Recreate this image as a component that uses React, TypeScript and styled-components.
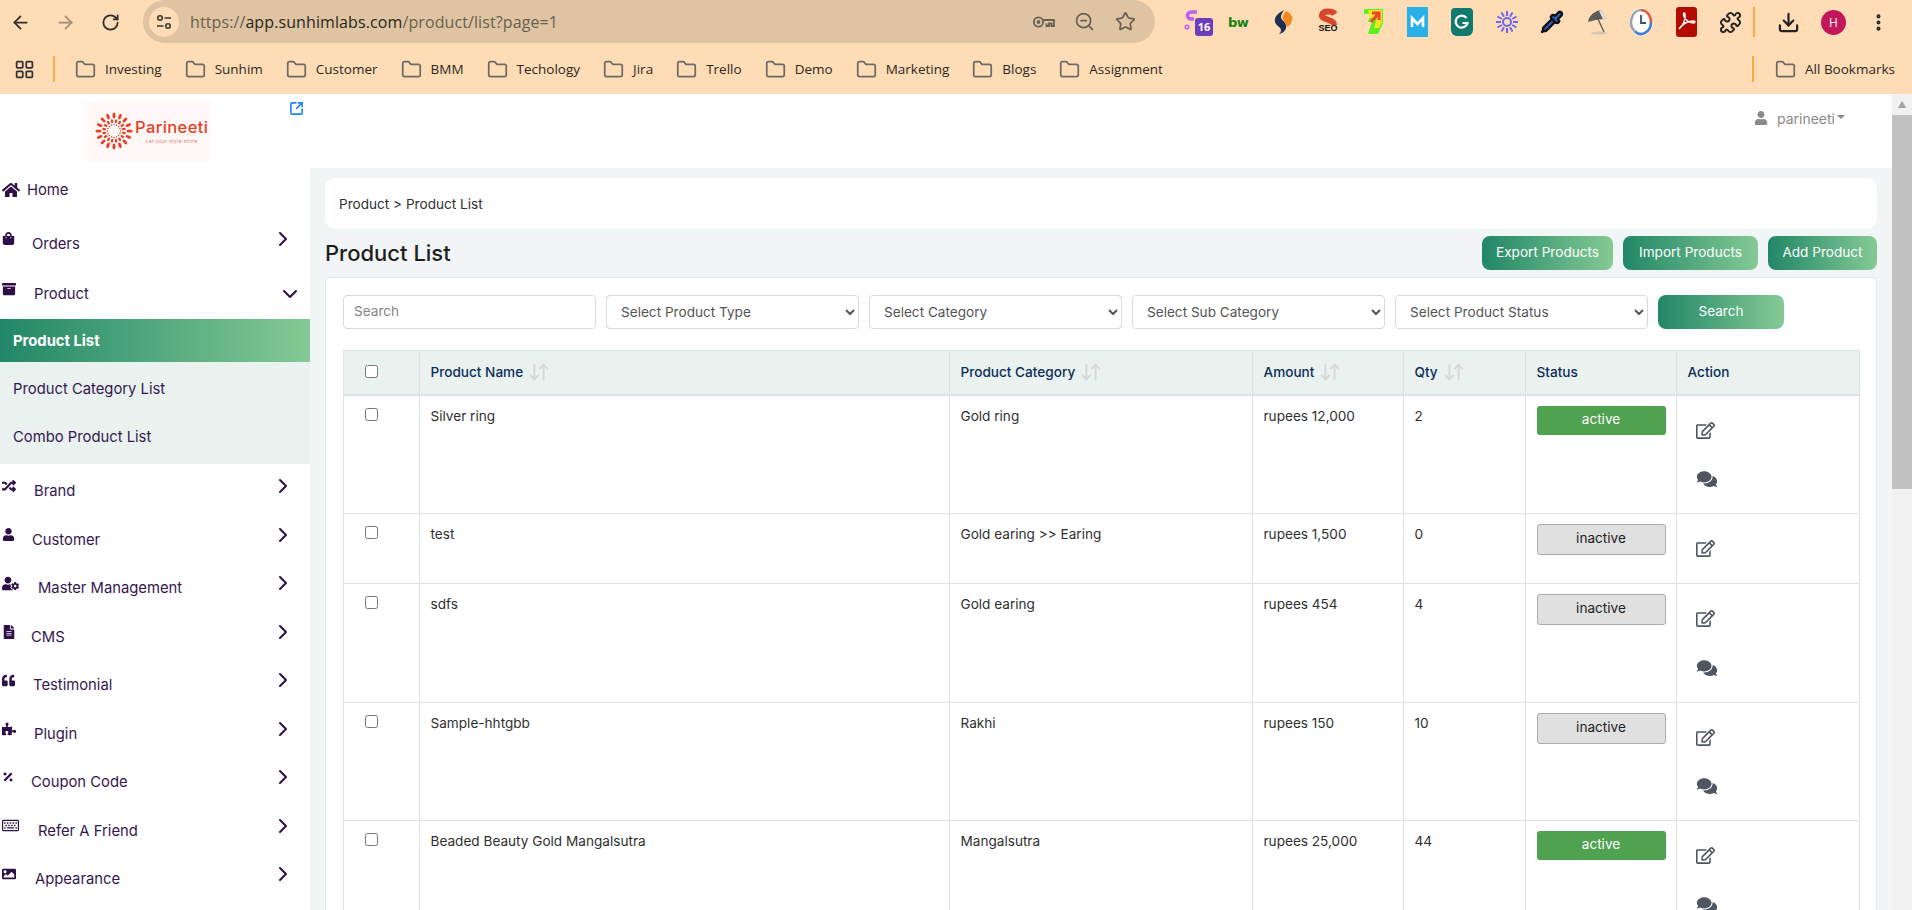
import React from 'react';
import styled, { createGlobalStyle } from 'styled-components';
import {
  ArrowDownUp,
  ArrowLeft,
  ArrowRight,
  ChevronDown,
  ChevronRight,
  Download,
  EllipsisVertical,
  LayoutGrid,
  Pipette,
  Puzzle,
  RotateCw,
  SquareArrowOutUpRight,
  Star,
  ZoomOut,
  Folder,
} from 'lucide-react';
import {
  FaArchive,
  FaComments,
  FaFileAlt,
  FaHome,
  FaImage,
  FaPercentage,
  FaPuzzlePiece,
  FaQuoteLeft,
  FaRandom,
  FaRegEdit,
  FaRegKeyboard,
  FaShoppingBag,
  FaUser,
  FaUserCog,
} from 'react-icons/fa';

const GlobalStyle = createGlobalStyle`
  html, body {
    margin: 0;
    height: 100%;
    overflow: hidden;
    background: #fff;
  }
  * { box-sizing: border-box; }
`;

const FONT = `Inter, "Open Sans", sans-serif`;
const GRADIENT = 'linear-gradient(90deg, #218767 0%, #84ca94 100%)';

// --- Browser chrome ---

const Browser = styled.div`
  display: flex;
  flex-direction: column;
  height: 910px;
  width: 1912px;
  overflow: hidden;
  font-family: ${FONT};
`;

const Chrome = styled.header`
  height: 94px;
  flex: none;
  background: #fedcb6;
  font-family: "Open Sans", sans-serif;
`;

const Toolbar = styled.div`
  display: flex;
  align-items: flex-start;
  height: 47px;
`;

const NavButton = styled.span<{ $dim?: boolean }>`
  width: 40px;
  height: 44px;
  margin-right: 5px;
  display: flex;
  align-items: center;
  justify-content: center;
  color: ${p => (p.$dim ? '#a08c74' : '#2b2b2b')};
`;

const Omnibox = styled.div`
  width: 1012px;
  height: 43px;
  margin-left: 8px;
  border-radius: 22px;
  background: #dec4a2;
  display: flex;
  align-items: center;
  padding-left: 6px;
`;

const SiteIcon = styled.span`
  width: 30px;
  height: 30px;
  border-radius: 50%;
  background: #fedcb6;
  display: flex;
  align-items: center;
  justify-content: center;
  flex: none;
`;

const Url = styled.div`
  margin-left: 11px;
  font-size: 16px;
  color: #6a5f50;
  flex: 1;
  white-space: nowrap;
  letter-spacing: 0.1px;
  b {
    font-weight: 400;
    color: #2b2620;
  }
`;

const OmniIcon = styled.span`
  width: 41px;
  height: 30px;
  display: flex;
  align-items: center;
  justify-content: center;
  color: #6b6256;
`;

const Extensions = styled.div`
  display: flex;
  margin-left: 16px;
  height: 44px;
  align-items: center;
`;

const Ext = styled.span`
  position: relative;
  width: 44.8px;
  height: 30px;
  display: flex;
  align-items: center;
  justify-content: center;
  flex: none;
`;

const ExtBadge = styled.span`
  position: absolute;
  left: 24px;
  top: 11px;
  width: 18px;
  height: 18px;
  border-radius: 3px;
  background: #6c3dbd;
  color: #fff;
  font-size: 11px;
  font-weight: 700;
  text-align: center;
  line-height: 18px;
`;

const BwMark = styled.span`
  font-family: "DejaVu Sans", sans-serif;
  font-weight: 700;
  font-size: 13px;
  color: #14820f;
  letter-spacing: -0.5px;
`;

const Divider = styled.span<{ $h: number }>`
  width: 2px;
  height: ${p => p.$h}px;
  background: #f9ab45;
  flex: none;
`;

const Avatar = styled.span`
  width: 25px;
  height: 25px;
  border-radius: 50%;
  background: #c2185b;
  color: #fff;
  font-size: 12px;
  text-align: center;
  line-height: 25px;
`;

const BookmarkBar = styled.div`
  display: flex;
  align-items: center;
  height: 44px;
  padding-left: 14px;
`;

const Bookmark = styled.span`
  display: flex;
  align-items: center;
  gap: 9px;
  margin-right: 23px;
  font-size: 13.5px;
  color: #2c2720;
  white-space: nowrap;
`;

const BookmarkSpacer = styled.span`
  flex: 1;
`;

// --- Page ---

const Viewport = styled.div`
  flex: 1;
  display: flex;
  min-height: 0;
`;

const Page = styled.div`
  flex: 1;
  min-width: 0;
  display: grid;
  grid-template-columns: 310px 1fr;
  grid-template-rows: 74px 1fr;
`;

const Scrollbar = styled.div`
  width: 20px;
  flex: none;
  background: #f1f1f1;
  display: flex;
  flex-direction: column;
  align-items: center;
`;

const ScrollArrow = styled.span`
  height: 21px;
  display: flex;
  align-items: center;
  color: #a3a3a3;
  font-size: 9px;
`;

const ScrollThumb = styled.div`
  width: 100%;
  height: 374px;
  background: #c1c1c1;
`;

const Sidebar = styled.aside`
  grid-row: 1 / 3;
  overflow: hidden;
  background: #fff;
`;

const LogoRow = styled.div`
  height: 74px;
  display: flex;
  align-items: flex-start;
  padding: 7px 6px 0 85px;
  justify-content: space-between;
  color: #1a82ff;
`;

const LogoBox = styled.div`
  width: 126px;
  height: 60px;
  background: #fff8f6;
  display: flex;
  align-items: center;
  padding-left: 10px;
  gap: 2px;
`;

const LogoWords = styled.div`
  display: flex;
  flex-direction: column;
  align-items: center;
`;

const LogoName = styled.span`
  font-size: 16.5px;
  line-height: 19px;
  color: #e63f26;
  font-weight: 500;
  letter-spacing: 0.4px;
`;

const LogoTag = styled.span`
  font-size: 5px;
  line-height: 8px;
  color: #e57f72;
  letter-spacing: 0.3px;
`;

const NavRow = styled.div<{ $h?: number; $after?: number; $indent: number }>`
  height: ${p => p.$h ?? 48.5}px;
  margin-bottom: ${p => p.$after ?? 0}px;
  display: flex;
  align-items: center;
  padding-left: 2px;
  color: #33174f;
  font-size: 14.8px;
  svg { flex: none; }
`;

const NavIcon = styled.span<{ $w: number }>`
  width: ${p => p.$w}px;
  flex: none;
  display: flex;
  margin-bottom: 10px;
  color: #2c0f47;
`;

const NavLabel = styled.span`
  flex: 1;
  white-space: nowrap;
`;

const NavChevron = styled.span<{ $down?: boolean }>`
  width: 24px;
  margin-right: ${p => (p.$down ? 8 : 15)}px;
  margin-bottom: ${p => (p.$down ? 0 : 10)}px;
  display: flex;
  color: #2c0f47;
`;

const SubList = styled.div`
  background: #e9f2ef;
  height: 145px;
`;

const SubItem = styled.div<{ $active?: boolean }>`
  height: ${p => (p.$active ? 43 : 48)}px;
  margin-bottom: ${p => (p.$active ? 3 : 0)}px;
  padding-left: 13px;
  display: flex;
  align-items: center;
  font-size: 14.8px;
  color: ${p => (p.$active ? '#fff' : '#33174f')};
  font-weight: ${p => (p.$active ? 700 : 400)};
  background: ${p => (p.$active ? GRADIENT : 'transparent')};
`;

const TopBar = styled.div`
  background: #fff;
  display: flex;
  justify-content: flex-end;
  align-items: flex-start;
  padding: 14px 47px 0 0;
  color: #8a8a8a;
  font-size: 14px;
`;

const UserMenu = styled.div`
  display: flex;
  align-items: center;
  height: 20px;
  gap: 9px;
`;

const Caret = styled.span`
  width: 0;
  height: 0;
  margin: 0 0 2px -7px;
  border-left: 4px solid transparent;
  border-right: 4px solid transparent;
  border-top: 4px solid #8a8a8a;
`;

const Main = styled.main`
  background: #f1f5f5;
  padding: 10px 15px 0;
  overflow: hidden;
  min-height: 0;
`;

const Breadcrumb = styled.div`
  height: 51px;
  background: #fff;
  border-radius: 10px;
  padding-left: 14px;
  display: flex;
  align-items: center;
  font-size: 13.6px;
  color: #2f2f2f;
`;

const TitleRow = styled.div`
  height: 48px;
  display: flex;
  align-items: flex-start;
  justify-content: space-between;
  padding-top: 7px;
`;

const Title = styled.h1`
  margin: 0;
  font-size: 22px;
  line-height: 34px;
  font-weight: 500;
  color: #1e1e1e;
`;

const ActionGroup = styled.div`
  display: flex;
  gap: 10px;
`;

const GradientButton = styled.button<{ $w: number }>`
  width: ${p => p.$w}px;
  height: 34px;
  border: none;
  border-radius: 8px;
  background: ${GRADIENT};
  color: #fff;
  font-family: ${FONT};
  font-size: 13.6px;
  padding: 0 0 2px;
  flex: none;
`;

const Card = styled.section`
  background: #fff;
  border: 1px solid #e2e6e6;
  border-radius: 4px;
  padding: 17px 17px 0;
`;

const Filters = styled.div`
  display: flex;
  gap: 10px;
  margin-bottom: 21px;
`;

const SearchInput = styled.input`
  width: 253px;
  height: 34px;
  border: 1px solid #d6dade;
  border-radius: 4px;
  padding: 0 10px 3px;
  font-family: ${FONT};
  font-size: 13.6px;
  color: #555;
  &::placeholder { color: #868686; }
`;

const Select = styled.select`
  width: 253px;
  height: 34px;
  border: 1px solid #d6dade;
  border-radius: 4px;
  background: #fff;
  padding: 0 6px 0 10px;
  font-family: ${FONT};
  font-size: 13.6px;
  color: #555;
`;

const Table = styled.table`
  width: 1516px;
  table-layout: fixed;
  border-collapse: collapse;
  font-size: 13.6px;
  color: #2f2f2f;
`;

const HeadCell = styled.th`
  height: 44px;
  background: #e9f2ef;
  border: 1px solid #dde2e6;
  border-bottom-width: 2px;
  padding: 0 10.5px;
  text-align: left;
  font-weight: 500;
  color: #0c2c5a;
  white-space: nowrap;
`;

const HeadInner = styled.span`
  display: flex;
  align-items: center;
  gap: 5px;
  color: #0c2c5a;
  svg { color: #d6d8d8; flex: none; }
`;

const Cell = styled.td`
  border: 1px solid #dde2e6;
  padding: 10px 10.5px 0;
  vertical-align: top;
  line-height: 21px;
`;

const Check = styled.input.attrs({ type: 'checkbox' })<{ $top: number }>`
  display: block;
  width: 13px;
  height: 13px;
  margin: ${p => p.$top}px 0 0 21px;
`;

const StatusBadge = styled.div<{ $active: boolean }>`
  height: ${p => (p.$active ? 29 : 31)}px;
  border-radius: 3px;
  display: flex;
  align-items: center;
  justify-content: center;
  background: ${p => (p.$active ? '#4fa250' : '#e0e0e0')};
  border: ${p => (p.$active ? 'none' : '1px solid #ababab')};
  color: ${p => (p.$active ? '#fff' : '#222')};
  font-size: 13.6px;
  padding-bottom: 2px;
`;

const Actions = styled.div`
  display: flex;
  flex-direction: column;
  gap: 30.6px;
  padding: 15px 0 25px 8px;
  color: #4f5660;
  svg { display: block; }
`;

// --- Data ---

const bookmarks = ['Investing', 'Sunhim', 'Customer', 'BMM', 'Techology', 'Jira', 'Trello', 'Demo', 'Marketing', 'Blogs', 'Assignment'];

const lowerNav = [
  { label: 'Brand', icon: <FaRandom size={14} />, w: 32 },
  { label: 'Customer', icon: <FaUser size={13} />, w: 30 },
  { label: 'Master Management', icon: <FaUserCog size={17} />, w: 36 },
  { label: 'CMS', icon: <FaFileAlt size={14} />, w: 29 },
  { label: 'Testimonial', icon: <FaQuoteLeft size={13} />, w: 31 },
  { label: 'Plugin', icon: <FaPuzzlePiece size={14} />, w: 32 },
  { label: 'Coupon Code', icon: <FaPercentage size={12} />, w: 29 },
  { label: 'Refer A Friend', icon: <FaRegKeyboard size={17} />, w: 36 },
  { label: 'Appearance', icon: <FaImage size={14} />, w: 33 },
  { label: 'Settings', icon: <FaFileAlt size={14} />, w: 33 },
];

const products = [
  { name: 'Silver ring', category: 'Gold ring', amount: 'rupees 12,000', qty: 2, active: true, chat: true },
  { name: 'test', category: 'Gold earing >> Earing', amount: 'rupees 1,500', qty: 0, active: false, chat: false },
  { name: 'sdfs', category: 'Gold earing', amount: 'rupees 454', qty: 4, active: false, chat: true },
  { name: 'Sample-hhtgbb', category: 'Rakhi', amount: 'rupees 150', qty: 10, active: false, chat: true },
  { name: 'Beaded Beauty Gold Mangalsutra', category: 'Mangalsutra', amount: 'rupees 25,000', qty: 44, active: true, chat: true },
];

const columns = [76, 530, 303, 151, 122, 151, 183];

// --- Small drawings ---

const SliderIcon = () => (
  <svg width="18" height="18" viewBox="0 0 18 18" fill="none" stroke="#3a332a" strokeWidth="1.6">
    <circle cx="5" cy="5" r="2.2" />
    <path d="M9.5 5H16M2 13h6.5" />
    <circle cx="13" cy="13" r="2.2" />
  </svg>
);

const KeyIcon = () => (
  <svg width="24" height="16" viewBox="0 0 24 16" fill="none" stroke="#6b6256" strokeWidth="1.8">
    <circle cx="6.5" cy="8" r="4.6" />
    <circle cx="6.5" cy="8" r="1" fill="#6b6256" />
    <path d="M11 6h11v6h-2.5V9.5H17V12h-2.5V9.5" />
  </svg>
);

const LogoFlower = () => (
  <svg width="38" height="38" viewBox="-19 -19 38 38" fill="#e63f26">
    {Array.from({ length: 16 }).map((_, i) => (
      <g key={i} transform={`rotate(${i * 22.5})`}>
        <ellipse cx="0" cy="-15.5" rx="1.5" ry="3" />
        <ellipse cx="0" cy="-10" rx="1.2" ry="2" transform="rotate(11)" />
        <circle cx="0" cy="-6.5" r="0.7" />
      </g>
    ))}
  </svg>
);

const SwirlIcon = () => (
  <svg width="20" height="26" viewBox="0 0 20 26">
    <path d="M11 1C5 4 1 8 2 13c1 4 6 5 6 8 0 2-1 3-2 4 5-1 8-5 7-9-1-4-5-5-5-8 0-3 2-5 3-7z" fill="#1e2f52" />
    <path d="M13 2c5 2 7 6 6 10-1 3-3 5-5 6 0-3-3-5-4-8-1-3 1-6 3-8z" fill="#f08a1d" />
  </svg>
);

const SeoIcon = () => (
  <svg width="24" height="28" viewBox="0 0 24 28">
    <path d="M19 6c-2-3-12-4-13 1-1 5 12 4 12 10" fill="none" stroke="#d9472b" strokeWidth="6" />
    <text x="12" y="23" textAnchor="middle" fontSize="9" fontWeight="700" fontFamily="Liberation Sans" fill="#111">SEO</text>
  </svg>
);

const ArrowExt = () => (
  <svg width="22" height="28" viewBox="0 0 22 28">
    <path d="M2 1h19v14l-5 11H6l4-12H6l3-8H2z" fill="#5cf01e" />
    <path d="M6 2h14v12l-3 6h-5l3-10H8z" fill="#f6e81c" />
    <path d="M9 14l7-8M10 5h7v7" fill="none" stroke="#ef4530" strokeWidth="3" />
  </svg>
);

const MIcon = () => (
  <svg width="21" height="30" viewBox="0 0 21 30">
    <rect width="21" height="30" fill="#29b0e6" />
    <path d="M5 20V11l5.500 6 5.500-6v9" fill="none" stroke="#fff" strokeWidth="2.600" />
  </svg>
);

const GIcon = () => (
  <svg width="22" height="28" viewBox="0 0 22 28">
    <path d="M4 0h14a4 4 0 0 1 4 4v18a6 6 0 0 1-6 6H6a6 6 0 0 1-6-6V4a4 4 0 0 1 4-4z" fill="#0f7a6e" />
    <path d="M15.500 10a6 6 0 1 0 1 5h-5" fill="none" stroke="#fff" strokeWidth="2.200" />
  </svg>
);

const BurstIcon = () => (
  <svg width="22" height="26" viewBox="-11 -13 22 26" stroke="#6a66f2" strokeWidth="2" fill="none">
    <circle r="4" />
    {Array.from({ length: 12 }).map((_, i) => (
      <line key={i} y1="-6" y2="-11" transform={`rotate(${i * 30})`} />
    ))}
  </svg>
);

const UmbrellaIcon = () => (
  <svg width="22" height="28" viewBox="0 0 22 28">
    <path d="M2 14C3 7 9 3 15 2l5 9c-6 0-12 1-18 3z" fill="#5c5c5c" />
    <path d="M15 2l5 9-3 .3L13 3z" fill="#e2e2de" />
    <path d="M11 9l7 15" stroke="#555" strokeWidth="1.300" />
    <ellipse cx="13" cy="25" rx="8" ry="1.500" fill="#cfc7b4" />
  </svg>
);

const ClockIcon = () => (
  <svg width="24" height="30" viewBox="0 0 24 30" fill="none">
    <ellipse cx="12" cy="15" rx="11.500" ry="14" fill="#fff" />
    <path d="M12 3a10 12 0 0 1 10 12" stroke="#e8563a" strokeWidth="2.600" />
    <path d="M22 15a10 12 0 0 1-16 9.500" stroke="#3b7dd8" strokeWidth="2.600" />
    <path d="M6 24.500A10 12 0 0 1 12 3" stroke="#9aa5b1" strokeWidth="2.600" />
    <path d="M12 8v8h5" stroke="#35506e" strokeWidth="1.800" />
  </svg>
);

const PdfIcon = () => (
  <svg width="21" height="30" viewBox="0 0 21 30">
    <rect width="21" height="30" rx="3" fill="#b30b00" />
    <path d="M3 22c4-3 7-10 6-15-.5-2-2-1-1.500 1 1 4 5 8 10 8 2 0 2-2 0-2-5 0-11 3-14.500 8z" fill="none" stroke="#fff" strokeWidth="1.400" />
  </svg>
);

const App = () => {
  return (
    <>
      <GlobalStyle />
      <Browser>
        <Chrome>
          <Toolbar>
            <NavButton><ArrowLeft size={21} strokeWidth={2} /></NavButton>
            <NavButton $dim><ArrowRight size={21} strokeWidth={2} /></NavButton>
            <NavButton><RotateCw size={19} strokeWidth={2.2} /></NavButton>
            <Omnibox>
              <SiteIcon><SliderIcon /></SiteIcon>
              <Url>https://<b>app.sunhimlabs.com</b>/product/list?page=1</Url>
              <OmniIcon><KeyIcon /></OmniIcon>
              <OmniIcon><ZoomOut size={21} /></OmniIcon>
              <OmniIcon style={{ marginRight: 9 }}><Star size={21} strokeWidth={2} /></OmniIcon>
            </Omnibox>
            <Extensions>
              <Ext>
                <svg width="20" height="26" viewBox="0 0 20 26" fill="none" stroke="#c25cf2" strokeWidth="3.500"><path d="M14 3H8a3 3 0 0 0 0 7h3" /><circle cx="4" cy="18" r=".8" /></svg>
                <ExtBadge>16</ExtBadge>
              </Ext>
              <Ext><BwMark>bw</BwMark></Ext>
              <Ext><SwirlIcon /></Ext>
              <Ext><SeoIcon /></Ext>
              <Ext><ArrowExt /></Ext>
              <Ext><MIcon /></Ext>
              <Ext><GIcon /></Ext>
              <Ext><BurstIcon /></Ext>
              <Ext><Pipette size={24} color="#111" fill="#2f5fd0" strokeWidth={2.400} /></Ext>
              <Ext><UmbrellaIcon /></Ext>
              <Ext><ClockIcon /></Ext>
              <Ext><PdfIcon /></Ext>
              <Ext><Puzzle size={23} color="#222" strokeWidth={2} /></Ext>
              <Divider $h={30} />
              <Ext style={{ marginLeft: 11 }}><Download size={23} color="#222" strokeWidth={2.300} /></Ext>
              <Ext><Avatar>H</Avatar></Ext>
              <Ext><EllipsisVertical size={21} color="#2b2b2b" strokeWidth={2.600} /></Ext>
            </Extensions>
          </Toolbar>
          <BookmarkBar>
            <LayoutGrid size={21} color="#333" strokeWidth={2} style={{ marginRight: 18 }} />
            <Divider $h={26} style={{ marginRight: 20 }} />
            {bookmarks.map(name => (
              <Bookmark key={name}>
                <Folder size={21} color="#6d6a66" strokeWidth={2} />
                {name}
              </Bookmark>
            ))}
            <BookmarkSpacer />
            <Divider $h={26} style={{ marginRight: 21 }} />
            <Bookmark style={{ marginRight: 17 }}>
              <Folder size={21} color="#6d6a66" strokeWidth={2} />
              All Bookmarks
            </Bookmark>
          </BookmarkBar>
        </Chrome>

        <Viewport>
          <Page>
            <Sidebar>
              <LogoRow>
                <LogoBox>
                  <LogoFlower />
                  <LogoWords>
                    <LogoName>Parineeti</LogoName>
                    <LogoTag>Let your style shine</LogoTag>
                  </LogoWords>
                </LogoBox>
                <SquareArrowOutUpRight size={15} strokeWidth={2.600} />
              </LogoRow>
              <NavRow $h={44} $after={7} $indent={0}>
                <NavIcon $w={25} style={{ marginBottom: 0 }}><FaHome size={18} /></NavIcon>
                <NavLabel>Home</NavLabel>
              </NavRow>
              <NavRow $h={49} $indent={0}>
                <NavIcon $w={30}><FaShoppingBag size={13} /></NavIcon>
                <NavLabel>Orders</NavLabel>
                <NavChevron><ChevronRight size={24} /></NavChevron>
              </NavRow>
              <NavRow $h={51} $indent={0}>
                <NavIcon $w={32}><FaArchive size={14} /></NavIcon>
                <NavLabel>Product</NavLabel>
                <NavChevron $down><ChevronDown size={24} /></NavChevron>
              </NavRow>
              <SubList>
                <SubItem $active>Product List</SubItem>
                <SubItem>Product Category List</SubItem>
                <SubItem>Combo Product List</SubItem>
              </SubList>
              <div style={{ height: 3 }} />
              {lowerNav.map(item => (
                <NavRow key={item.label} $indent={0}>
                  <NavIcon $w={item.w}>{item.icon}</NavIcon>
                  <NavLabel>{item.label}</NavLabel>
                  <NavChevron><ChevronRight size={24} /></NavChevron>
                </NavRow>
              ))}
            </Sidebar>

            <TopBar>
              <UserMenu>
                <FaUser size={14} />
                parineeti
                <Caret />
              </UserMenu>
            </TopBar>

            <Main>
              <Breadcrumb>Product &gt; Product List</Breadcrumb>
              <TitleRow>
                <Title>Product List</Title>
                <ActionGroup>
                  <GradientButton $w={131}>Export Products</GradientButton>
                  <GradientButton $w={135}>Import Products</GradientButton>
                  <GradientButton $w={109}>Add Product</GradientButton>
                </ActionGroup>
              </TitleRow>
              <Card>
                <Filters>
                  <SearchInput placeholder="Search" />
                  <Select><option>Select Product Type</option></Select>
                  <Select><option>Select Category</option></Select>
                  <Select><option>Select Sub Category</option></Select>
                  <Select><option>Select Product Status</option></Select>
                  <GradientButton $w={126}>Search</GradientButton>
                </Filters>
                <Table>
                  <colgroup>
                    {columns.map((w, i) => <col key={i} style={{ width: w }} />)}
                  </colgroup>
                  <thead>
                    <tr>
                      <HeadCell style={{ padding: 0 }}><Check $top={-2} /></HeadCell>
                      {['Product Name', 'Product Category', 'Amount', 'Qty'].map(h => (
                        <HeadCell key={h}>
                          <HeadInner>{h}<ArrowDownUp size={22} strokeWidth={2} /></HeadInner>
                        </HeadCell>
                      ))}
                      <HeadCell>Status</HeadCell>
                      <HeadCell>Action</HeadCell>
                    </tr>
                  </thead>
                  <tbody>
                    {products.map(p => (
                      <tr key={p.name}>
                        <Cell style={{ padding: 0 }}><Check $top={12} /></Cell>
                        <Cell>{p.name}</Cell>
                        <Cell>{p.category}</Cell>
                        <Cell>{p.amount}</Cell>
                        <Cell>{p.qty}</Cell>
                        <Cell>
                          <StatusBadge $active={p.active}>{p.active ? 'active' : 'inactive'}</StatusBadge>
                        </Cell>
                        <Cell>
                          <Actions>
                            <FaRegEdit size={19} />
                            {p.chat && <FaComments size={22} style={{ height: 18 }} />}
                          </Actions>
                        </Cell>
                      </tr>
                    ))}
                  </tbody>
                </Table>
              </Card>
            </Main>
          </Page>
          <Scrollbar>
            <ScrollArrow>▲</ScrollArrow>
            <ScrollThumb />
          </Scrollbar>
        </Viewport>
      </Browser>
    </>
  );
};

export default App;
